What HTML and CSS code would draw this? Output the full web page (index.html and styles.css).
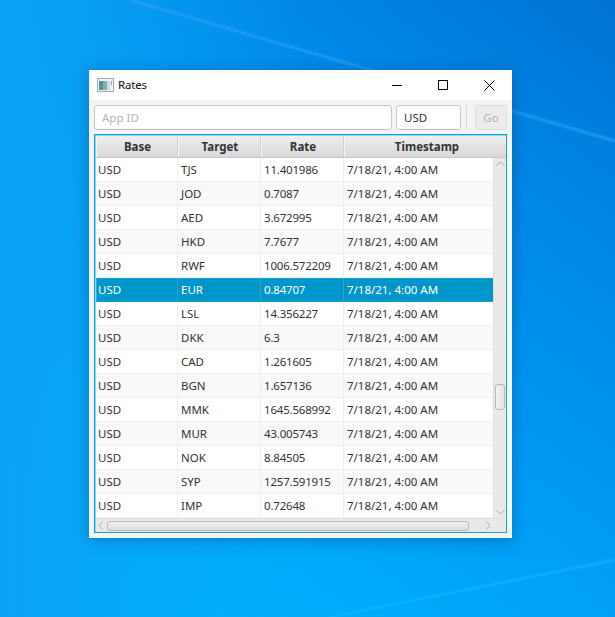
FILE: index.html
```html
<!DOCTYPE html>
<html lang="en">
<head>
<meta charset="utf-8">
<title>Rates</title>
<link rel="stylesheet" href="styles.css">
</head>
<body>
<svg class="wallpaper" width="615" height="617" viewBox="0 0 615 617" aria-hidden="true">
  <defs>
    <linearGradient id="sky" gradientUnits="userSpaceOnUse" x1="640" y1="-20" x2="160" y2="617">
      <stop offset="0" stop-color="#0070d1"/>
      <stop offset="0.3" stop-color="#0088e6"/>
      <stop offset="0.6" stop-color="#009cf4"/>
      <stop offset="1" stop-color="#00b5ff"/>
    </linearGradient>
    <linearGradient id="dim" gradientUnits="userSpaceOnUse" x1="0" y1="0" x2="300" y2="0">
      <stop offset="0" stop-color="#0aa2f5"/>
      <stop offset="1" stop-color="#0aa2f5" stop-opacity="0"/>
    </linearGradient>
    <filter id="soft" x="-5%" y="-50%" width="110%" height="200%"><feGaussianBlur stdDeviation="0.8"/></filter>
  </defs>
  <rect width="615" height="617" fill="url(#sky)"/>
  <rect width="300" height="617" fill="url(#dim)"/>
  <path d="M130 0L615 141" stroke="#2ea2f5" stroke-width="2" fill="none" filter="url(#soft)"/>
  <path d="M615 560L330 617" stroke="#10b8ff" stroke-width="2" fill="none" filter="url(#soft)"/>
</svg>
<main class="window">
  <header class="titlebar">
    <svg class="app-icon" width="17" height="14" viewBox="0 0 17 14">
      <rect x="0.5" y="0.5" width="16" height="13" fill="#eef1f2" stroke="#a4adb4"/>
      <rect x="2" y="3" width="8" height="9" fill="#5d9196"/>
      <rect x="6" y="3" width="4" height="9" fill="#7fb0ac"/>
      <rect x="10" y="3" width="3" height="9" fill="#cfdddc"/>
      <rect x="14" y="3" width="1" height="4" fill="#8ea6b4"/>
    </svg>
    <span class="title">Rates</span>
    <div class="caption">
      <button class="cap"><svg width="10" height="10" viewBox="0 0 10 10"><path d="M0 5.500h10" stroke="#000"/></svg></button>
      <button class="cap"><svg width="10" height="10" viewBox="0 0 10 10"><rect x="0.500" y="0.500" width="9" height="9" fill="none" stroke="#000"/></svg></button>
      <button class="cap"><svg width="11" height="11" viewBox="0 0 11 11"><path d="M.5.5l10 10M10.500.5l-10 10" stroke="#000" fill="none"/></svg></button>
    </div>
  </header>
  <div class="content">
    <div class="toolbar">
      <div class="field grow placeholder">App ID</div>
      <div class="field base">USD</div>
      <div class="sep"></div>
      <div class="go">Go</div>
    </div>
    <section class="table">
      <div class="head">
        <div class="hcell">Base</div><div class="hcell">Target</div><div class="hcell">Rate</div><div class="hcell">Timestamp</div>
      </div>
      <div class="middle">
        <div class="rows">
          <div class="row"><span>USD</span><span>TJS</span><span>11.401986</span><span>7/18/21, 4:00 AM</span></div>
          <div class="row"><span>USD</span><span>JOD</span><span>0.7087</span><span>7/18/21, 4:00 AM</span></div>
          <div class="row"><span>USD</span><span>AED</span><span>3.672995</span><span>7/18/21, 4:00 AM</span></div>
          <div class="row"><span>USD</span><span>HKD</span><span>7.7677</span><span>7/18/21, 4:00 AM</span></div>
          <div class="row"><span>USD</span><span>RWF</span><span>1006.572209</span><span>7/18/21, 4:00 AM</span></div>
          <div class="row selected"><span>USD</span><span>EUR</span><span>0.84707</span><span>7/18/21, 4:00 AM</span></div>
          <div class="row"><span>USD</span><span>LSL</span><span>14.356227</span><span>7/18/21, 4:00 AM</span></div>
          <div class="row"><span>USD</span><span>DKK</span><span>6.3</span><span>7/18/21, 4:00 AM</span></div>
          <div class="row"><span>USD</span><span>CAD</span><span>1.261605</span><span>7/18/21, 4:00 AM</span></div>
          <div class="row"><span>USD</span><span>BGN</span><span>1.657136</span><span>7/18/21, 4:00 AM</span></div>
          <div class="row"><span>USD</span><span>MMK</span><span>1645.568992</span><span>7/18/21, 4:00 AM</span></div>
          <div class="row"><span>USD</span><span>MUR</span><span>43.005743</span><span>7/18/21, 4:00 AM</span></div>
          <div class="row"><span>USD</span><span>NOK</span><span>8.84505</span><span>7/18/21, 4:00 AM</span></div>
          <div class="row"><span>USD</span><span>SYP</span><span>1257.591915</span><span>7/18/21, 4:00 AM</span></div>
          <div class="row"><span>USD</span><span>IMP</span><span>0.72648</span><span>7/18/21, 4:00 AM</span></div>
        </div>
        <div class="vbar">
          <svg width="9" height="5" viewBox="0 0 9 5"><path d="M.5 4.500l4-3.500 4 3.500" fill="none" stroke="#a8a8a8"/></svg>
          <div class="vtrack"><div class="vthumb"></div></div>
          <svg width="9" height="5" viewBox="0 0 9 5"><path d="M.5.500l4 3.500 4-3.500" fill="none" stroke="#a8a8a8"/></svg>
        </div>
      </div>
      <div class="hbar">
        <svg width="5" height="9" viewBox="0 0 5 9"><path d="M4.500.500L1 4.500l3.500 4" fill="none" stroke="#a8a8a8"/></svg>
        <div class="hthumb"></div>
        <svg width="5" height="9" viewBox="0 0 5 9"><path d="M.500.500L4 4.500l-3.500 4" fill="none" stroke="#a8a8a8"/></svg>
      </div>
    </section>
  </div>
</main>
</body>
</html>
```

FILE: styles.css
```css
* { box-sizing: border-box; }
html, body { margin: 0; height: 617px; overflow: hidden; }
body {
  width: 615px;
  padding: 70px 103px 79px 89px;
  font: 11.5px/16px "Noto Sans", "Open Sans", sans-serif;
  color: #333;
  background: #00a0f5;
}
.wallpaper { position: absolute; left: 0; top: 0; }
.window {
  position: relative;
  width: 423px;
  height: 468px;
  display: flex;
  flex-direction: column;
  background: #f4f4f4;
  box-shadow: 0 2px 14px rgba(0, 40, 90, 0.35);
}
.titlebar {
  height: 30px;
  display: flex;
  align-items: center;
  background: #fff;
  padding-left: 8px;
  color: #111;
}
.app-icon { margin-right: 4px; }
.title { flex: 1; letter-spacing: -0.2px; }
.caption { display: flex; }
.cap {
  width: 46px;
  height: 30px;
  padding: 0;
  border: 0;
  background: none;
  display: flex;
  align-items: center;
  justify-content: center;
}
.content {
  flex: 1;
  display: flex;
  flex-direction: column;
  gap: 4px;
  padding: 5px;
}
.toolbar { height: 25px; display: flex; align-items: center; }
.field {
  height: 25px;
  display: flex;
  align-items: center;
  padding-left: 7px;
  background: #fff;
  border: 1px solid #c8c8c8;
  border-radius: 3px;
}
.grow { flex: 1; }
.placeholder { color: #b4b4b4; }
.base { width: 65px; margin-left: 4px; }
.sep { width: 1px; height: 25px; background: #d8d8d8; margin: 0 8px 0 5px; }
.go {
  width: 32px;
  height: 25px;
  display: flex;
  align-items: center;
  justify-content: center;
  color: #b0b0b0;
  background: #ececec;
  border: 1px solid #dcdcdc;
  border-radius: 3px;
}
.table {
  flex: 1;
  display: flex;
  flex-direction: column;
  border: 1px solid #0ba3dc;
  box-shadow: inset 0 0 0 1px #8fd6f0;
  padding: 1px 0 0 1px;
  background: #fff;
  min-height: 0;
}
.head {
  height: 22px;
  flex: none;
  display: grid;
  grid-template-columns: 82px 83px 83px 1fr;
  background: linear-gradient(#efefef, #d8d8d8);
  border-bottom: 1px solid #c8c8c8;
}
.hcell {
  display: flex;
  align-items: center;
  justify-content: center;
  padding-left: 2px;
  font-weight: 700;
  color: #333;
  border-right: 1px solid #d0d0d0;
  box-shadow: inset 1px 0 0 #f6f6f6;
}
.hcell:last-child { border-right: 0; padding-left: 4px; }
.middle { flex: 1; display: flex; min-height: 0; }
.rows { flex: 1; overflow: hidden; }
.row {
  height: 24px;
  display: grid;
  grid-template-columns: 82px 83px 83px 1fr;
  background: #fff;
  box-shadow: inset 0 -1px 0 #f0f0f0;
}
.row:nth-child(even) { background: #f9f9f9; }
.row span {
  display: flex;
  align-items: center;
  padding-left: 3px;
  border-right: 1px solid #eeeeee;
}
.row span:first-child { padding-left: 2px; }
.row span:nth-child(3) { letter-spacing: -0.2px; }
.row span:last-child { border-right: 0; }
.row.selected {
  background: #0096c9;
  color: #fff;
  box-shadow: inset 0 1px 0 #0ba3dc, inset 0 -1px 0 #0ba3dc, inset 1px 0 0 #35add6;
}
.row.selected span { border-right-color: #2aa4cf; }
.vbar {
  width: 13px;
  flex: none;
  display: flex;
  flex-direction: column;
  align-items: center;
  padding: 3px 0;
  background: #e9e9e9;
  border-left: 1px solid #dedede;
}
.vtrack { flex: 1; width: 100%; padding-top: 218px; display: flex; justify-content: center; }
.vthumb {
  width: 10px;
  height: 26px;
  background: linear-gradient(90deg, #f4f4f4, #e2e2e2);
  border: 1px solid #b8b8b8;
  border-radius: 3px;
}
.hbar {
  height: 14px;
  flex: none;
  display: flex;
  align-items: center;
  padding: 0 15px 0 2px;
  background: #e9e9e9;
  border-top: 1px solid #dedede;
}
.hthumb {
  width: 362px;
  height: 10px;
  margin: 0 auto 0 4px;
  background: linear-gradient(#f0f0f0, #dedede);
  border: 1px solid #b8b8b8;
  border-radius: 3px;
}
```
